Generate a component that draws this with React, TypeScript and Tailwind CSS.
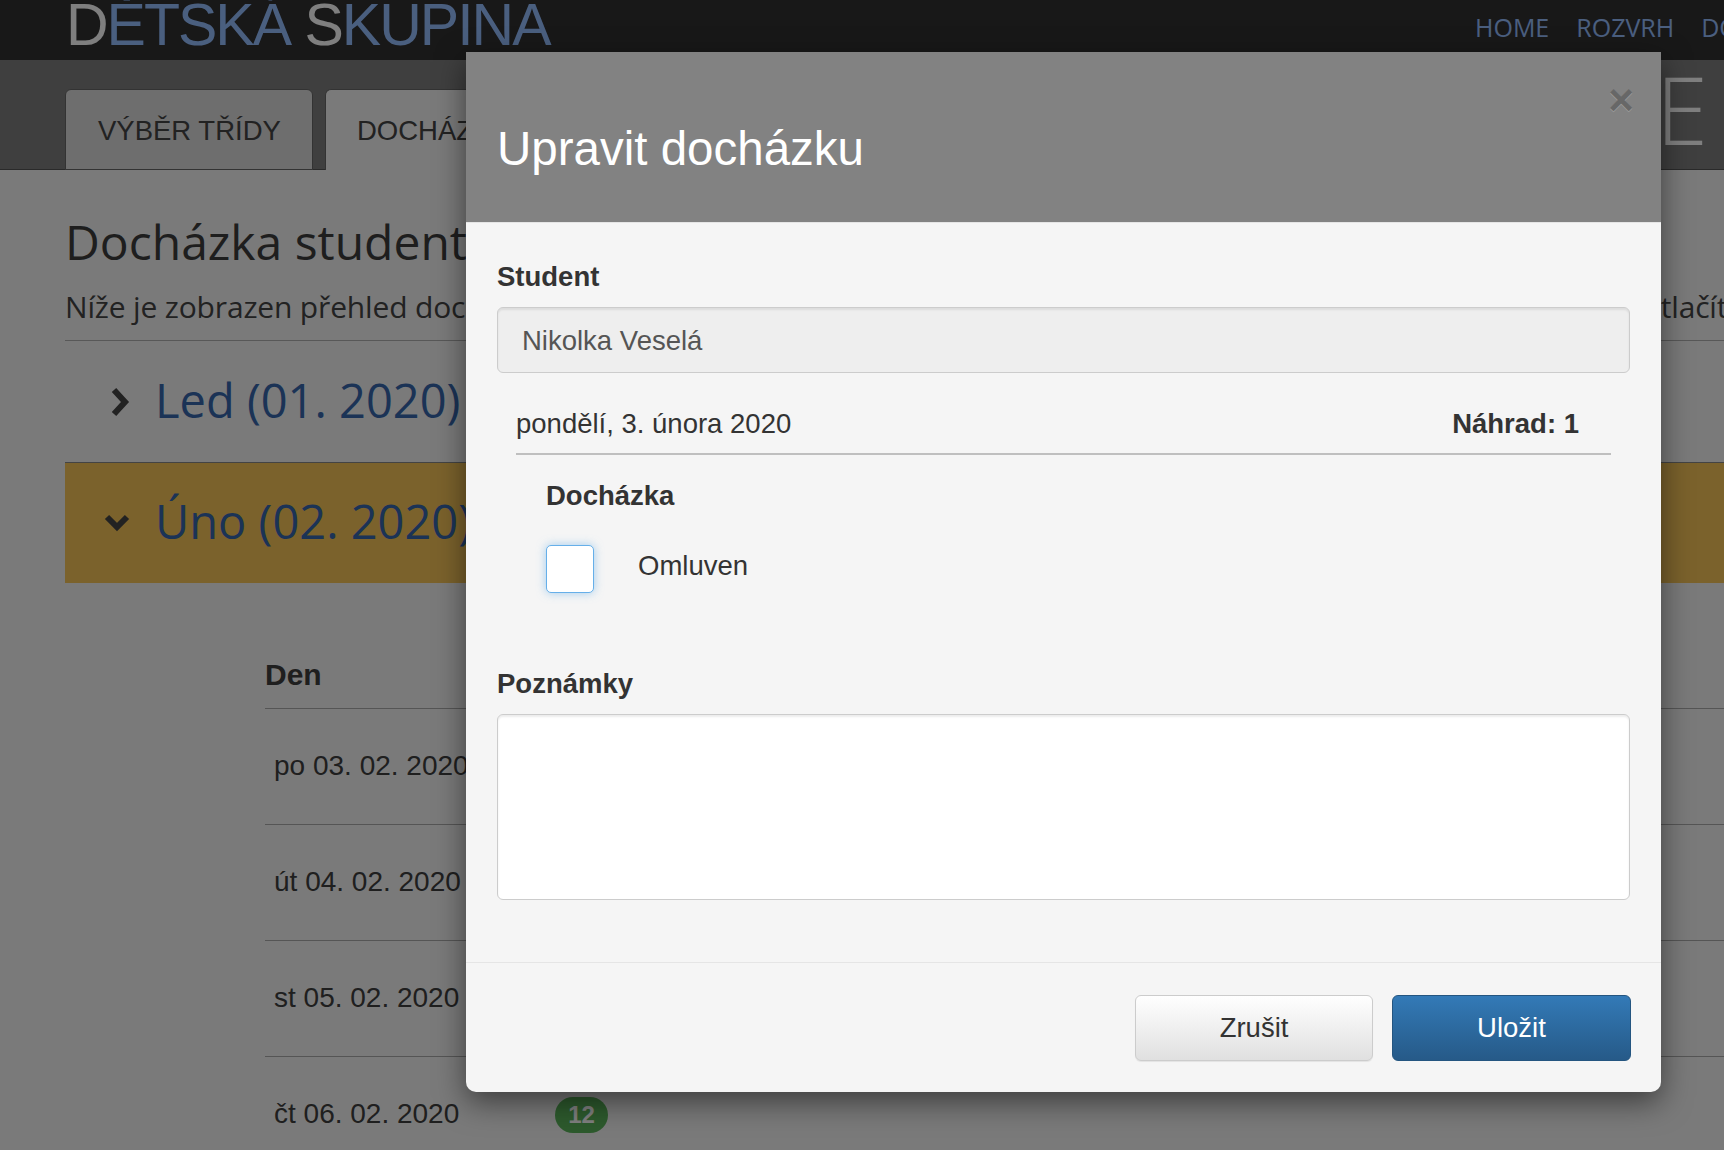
import React from 'react';

function ChevronRight() {
  return (
    <svg width="20" height="30" viewBox="0 0 20 30" className="shrink-0">
      <polyline points="4,3 15,15 4,27" fill="none" stroke="#444" strokeWidth="6" strokeLinejoin="miter" />
    </svg>
  );
}

function ChevronDown() {
  return (
    <svg width="26" height="18" viewBox="0 0 26 18" className="shrink-0">
      <polyline points="3,3 13,13 23,3" fill="none" stroke="#444" strokeWidth="6" strokeLinejoin="miter" />
    </svg>
  );
}

const rows = [
  { d: 'po 03. 02. 2020', n: '12' },
  { d: 'út 04. 02. 2020', n: '12' },
  { d: 'st 05. 02. 2020', n: '12' },
  { d: 'čt 06. 02. 2020', n: '12' },
  { d: 'pá 07. 02. 2020', n: '12' },
];

export default function App() {
  return (
    <div className="relative w-[1724px] h-[1150px] overflow-hidden bg-[#f4f4f4] font-['Liberation_Sans',Arial,sans-serif]">
      {/* Top navbar */}
      <div className="h-[60px] bg-[#303030] flex overflow-hidden">
        <div className="w-[1475px] shrink-0 pl-[66px] overflow-hidden">
          <div className="mt-[-4px] text-[59px] leading-[59px] tracking-[-2px] whitespace-nowrap">
            <span className="text-white">D</span>
            <span className="text-[#94beff]">ĚTSKÁ </span>
            <span className="text-white">S</span>
            <span className="text-[#94beff]">KUPINA</span>
          </div>
        </div>
        <div className="flex gap-[27px] pt-[12px] whitespace-nowrap shrink-0 font-['Open_Sans',sans-serif] text-[25px] leading-[30px] text-[#96beff]">
          <span>HOME</span>
          <span>ROZVRH</span>
          <span>DOCHÁZKA</span>
        </div>
      </div>

      {/* Tab band */}
      <div className="h-[110px] bg-[#7e7e7e] border-b border-[#555] flex items-end pl-[65px]">
        <div className="flex gap-[12px] items-end mb-[-1px]">
          <div className="h-[81px] w-[248px] bg-[#dcdcdc] border border-[#666] rounded-t-[6px] pt-[25px] pl-[32px] text-[27.5px] leading-[32px] text-[#444] whitespace-nowrap">
            VÝBĚR TŘÍDY
          </div>
          <div className="h-[81px] bg-[#f4f4f4] border border-b-0 border-[#666] rounded-t-[6px] pt-[25px] px-[31px] text-[27.5px] leading-[32px] text-[#444] whitespace-nowrap">
            DOCHÁZKA
          </div>
        </div>
        <div className="ml-auto self-start mt-[2px] pr-[16px] font-['Open_Sans',sans-serif] font-light text-[94px] leading-[94px] text-white whitespace-nowrap">
          TŘÍDA SLUNCE
        </div>
      </div>

      {/* Page content */}
      <div className="pl-[65px]">
        <div className="border-b border-[#b0b0b0] pb-[15px] font-['Open_Sans',sans-serif]">
          <h1 className="mt-[44px] text-[48px] leading-[56px] text-[#3c3c3c] whitespace-nowrap">
            Docházka studenta Nikolka Veselá
          </h1>
          <p className="mt-[19px] text-[30px] leading-[36px] tracking-[-0.16px] text-[#444] whitespace-nowrap overflow-hidden">
            Níže je zobrazen přehled docházky vybraného studenta. Pro úpravu docházky v daný den stačí jednoduše stisknout tlačítko upravit.
          </p>
        </div>

        <div className="h-[122px] border-b border-[#888] flex items-center pl-[45px] gap-[25px] font-['Open_Sans',sans-serif]">
          <ChevronRight />
          <span className="text-[47px] leading-[56px] text-[#3666ac] mt-[-4px] whitespace-nowrap">Led (01. 2020)</span>
        </div>

        <div className="h-[120px] bg-[#f6c458] flex items-center pl-[39px] gap-[25px] font-['Open_Sans',sans-serif]">
          <ChevronDown />
          <span className="text-[47px] leading-[56px] text-[#3666ac] mt-[-4px] whitespace-nowrap">Úno (02. 2020)</span>
        </div>

        {/* Table */}
        <div className="ml-[200px]">
          <div className="h-[126px] border-b border-[#aaa] flex items-end pb-[16px] text-[30px] leading-[34px] font-bold text-[#3e3e3e]">
            <div className="w-[290px]">Den</div>
            <div>Docházka</div>
          </div>
          {rows.map((r) => (
            <div key={r.d} className="h-[116px] border-b border-[#aaa] flex items-start pt-[41px]">
              <div className="w-[290px] pl-[9px] text-[28px] leading-[32px] text-[#3e3e3e] whitespace-nowrap">{r.d}</div>
              <div className="mt-[-1px] h-[36px] w-[53px] rounded-full bg-[#5ab45a] text-white font-bold text-[24px] flex items-center justify-center">
                {r.n}
              </div>
            </div>
          ))}
        </div>
      </div>

      {/* Backdrop */}
      <div className="absolute inset-0 bg-black/50" />

      {/* Modal */}
      <div className="absolute left-[466px] top-[52px] w-[1195px] bg-[#f5f5f5] rounded-b-[10px] shadow-[0_10px_30px_rgba(0,0,0,0.5)]">
        <div className="relative h-[171px] bg-[#828282] border-b border-[#e5e5e5] px-[31px] pt-[71px]">
          <h2 className="text-[47.5px] leading-[52px] text-white">Upravit docházku</h2>
          <button className="absolute right-[27px] top-[26px] text-[44px] leading-[44px] font-bold text-black opacity-20 [text-shadow:0_1px_0_#fff]">
            ×
          </button>
        </div>

        <div className="px-[31px] pt-[38px] pb-[62px] text-[#333]">
          <div className="text-[27.5px] leading-[32px] font-bold">Student</div>
          <div className="mt-[14px] h-[66px] rounded-[6px] border border-[#ccc] bg-[#eeeeee] px-[24px] pt-[2px] flex items-center text-[27.5px] leading-[32px] text-[#555] shadow-[inset_0_2px_2px_rgba(0,0,0,0.075)]">
            Nikolka Veselá
          </div>

          <div className="mt-[35px] mx-[19px] flex justify-between pr-[32px] pb-[13px] border-b-2 border-[#bfbfbf] text-[27.5px] leading-[32px]">
            <span>pondělí, 3. února 2020</span>
            <span className="font-bold">Náhrad: 1</span>
          </div>

          <div className="ml-[49px] mt-[25px] text-[27.5px] leading-[32px] font-bold">Docházka</div>
          <div className="ml-[49px] mt-[33px] flex items-start">
            <div className="w-[48px] h-[48px] bg-white border border-[#66afe9] rounded-[5px] shadow-[0_0_10px_rgba(102,175,233,0.6)]" />
            <span className="ml-[44px] mt-[5px] text-[27.5px] leading-[32px]">Omluven</span>
          </div>

          <div className="mt-[75px] text-[27.5px] leading-[32px] font-bold">Poznámky</div>
          <textarea className="mt-[14px] block w-full h-[186px] resize-none bg-white border border-[#ccc] rounded-[6px] shadow-[inset_0_2px_2px_rgba(0,0,0,0.075)]" />
        </div>

        <div className="border-t border-[#e5e5e5] pt-[32px] pb-[31px] pr-[30px] flex justify-end gap-[19px]">
          <button className="w-[238px] h-[66px] rounded-[6px] border border-[#ccc] bg-gradient-to-b from-white to-[#e0e0e0] text-[#333] text-[27.5px] leading-[32px] shadow-[0_1px_1px_rgba(0,0,0,0.075)]">
            Zrušit
          </button>
          <button className="w-[239px] h-[66px] rounded-[6px] border border-[#245580] bg-gradient-to-b from-[#337ab7] to-[#265a88] text-white text-[27.5px] leading-[32px]">
            Uložit
          </button>
        </div>
      </div>
    </div>
  );
}
